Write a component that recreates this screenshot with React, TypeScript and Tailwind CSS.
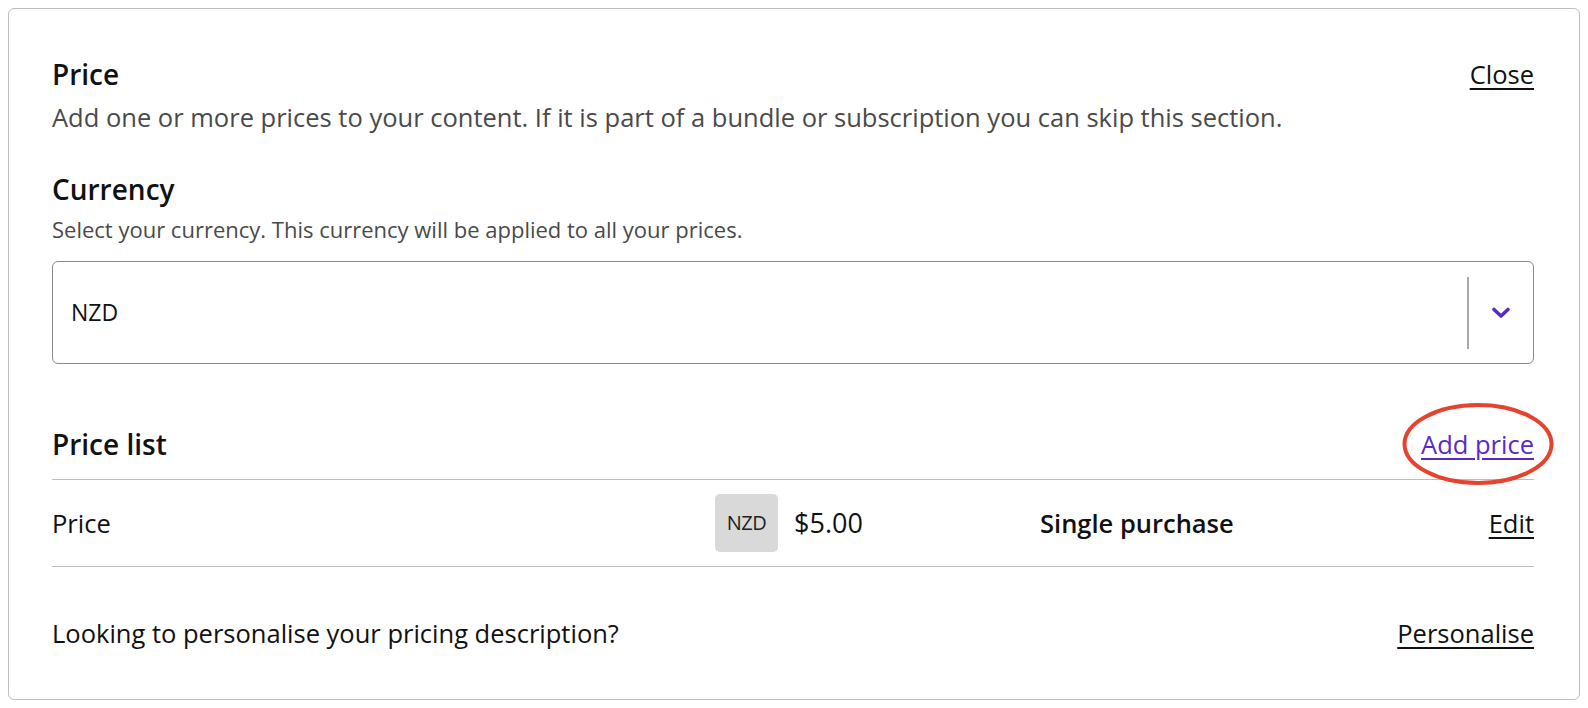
import React from "react";

const font = { fontFamily: '"Open Sans", "Noto Sans", sans-serif' };

export default function App() {
  return (
    <div className="min-h-screen bg-white p-2" style={font}>
      <div className="rounded-md border border-[#bdbdbd] pl-[43px] pr-[45px] pt-[49px] pb-[48px] text-[#111]">
        {/* Header */}
        <div className="flex items-start justify-between">
          <h1 className="text-[28px] leading-[32px] font-semibold">Price</h1>
          <button className="text-[25.5px] leading-[32px] underline underline-offset-4">Close</button>
        </div>
        <p className="mt-[11px] text-[25.5px] leading-[32px] text-[#4a4a4a]">
          Add one or more prices to your content. If it is part of a bundle or subscription you can skip this section.
        </p>

        {/* Currency */}
        <h2 className="mt-[40px] text-[28px] leading-[32px] font-semibold">Currency</h2>
        <p className="mt-[10px] text-[22px] leading-[28px] text-[#4a4a4a]">
          Select your currency. This currency will be applied to all your prices.
        </p>
        <div className="mt-[18px] flex h-[103px] items-center rounded-md border border-[#8a8a8a] pl-[18px]">
          <span className="flex-1 text-[23px]">NZD</span>
          <div className="h-[72px] w-[2px] bg-[#a8a8a8]" />
          <div className="flex w-[64px] items-center justify-center">
            <svg width="20" height="13" viewBox="0 0 20 13" fill="none">
              <path d="M3 3.5l7 6.5 7-6.5" stroke="#5a2bc4" strokeWidth="3.6" strokeLinecap="round" strokeLinejoin="round" />
            </svg>
          </div>
        </div>

        {/* Price list */}
        <div className="mt-[64px] flex h-[52px] items-start justify-between border-b border-[#bdbdbd]">
          <h2 className="text-[28px] leading-[32px] font-semibold">Price list</h2>
          <div className="relative">
            <button className="text-[25.5px] leading-[32px] text-[#5a2bc4] underline underline-offset-4">Add price</button>
            <svg
              className="pointer-events-none absolute left-1/2 top-1/2 -translate-x-1/2 -translate-y-1/2"
              width="156"
              height="86"
              viewBox="0 0 156 86"
            >
              <ellipse cx="78" cy="43" rx="73.5" ry="39" fill="none" stroke="#e5432e" strokeWidth="4" />
            </svg>
          </div>
        </div>

        <div className="flex h-[87px] items-center border-b border-[#bdbdbd]">
          <span className="w-[663px] text-[25.5px]">Price</span>
          <span className="flex h-[58px] w-[63px] items-center justify-center rounded-[5px] bg-[#d9d9d9] text-[20px] tracking-[-0.5px] text-[#222]">
            NZD
          </span>
          <span className="ml-[16px] w-[246px] text-[27px]">$5.00</span>
          <span className="flex-1 text-[25.5px] font-semibold">Single purchase</span>
          <button className="text-[25.5px] underline underline-offset-4">Edit</button>
        </div>

        <div className="flex items-center justify-between pt-[50px] pb-[2px]">
          <span className="text-[25.5px] leading-[32px]">Looking to personalise your pricing description?</span>
          <button className="text-[25.5px] leading-[32px] underline underline-offset-4">Personalise</button>
        </div>
      </div>
    </div>
  );
}
